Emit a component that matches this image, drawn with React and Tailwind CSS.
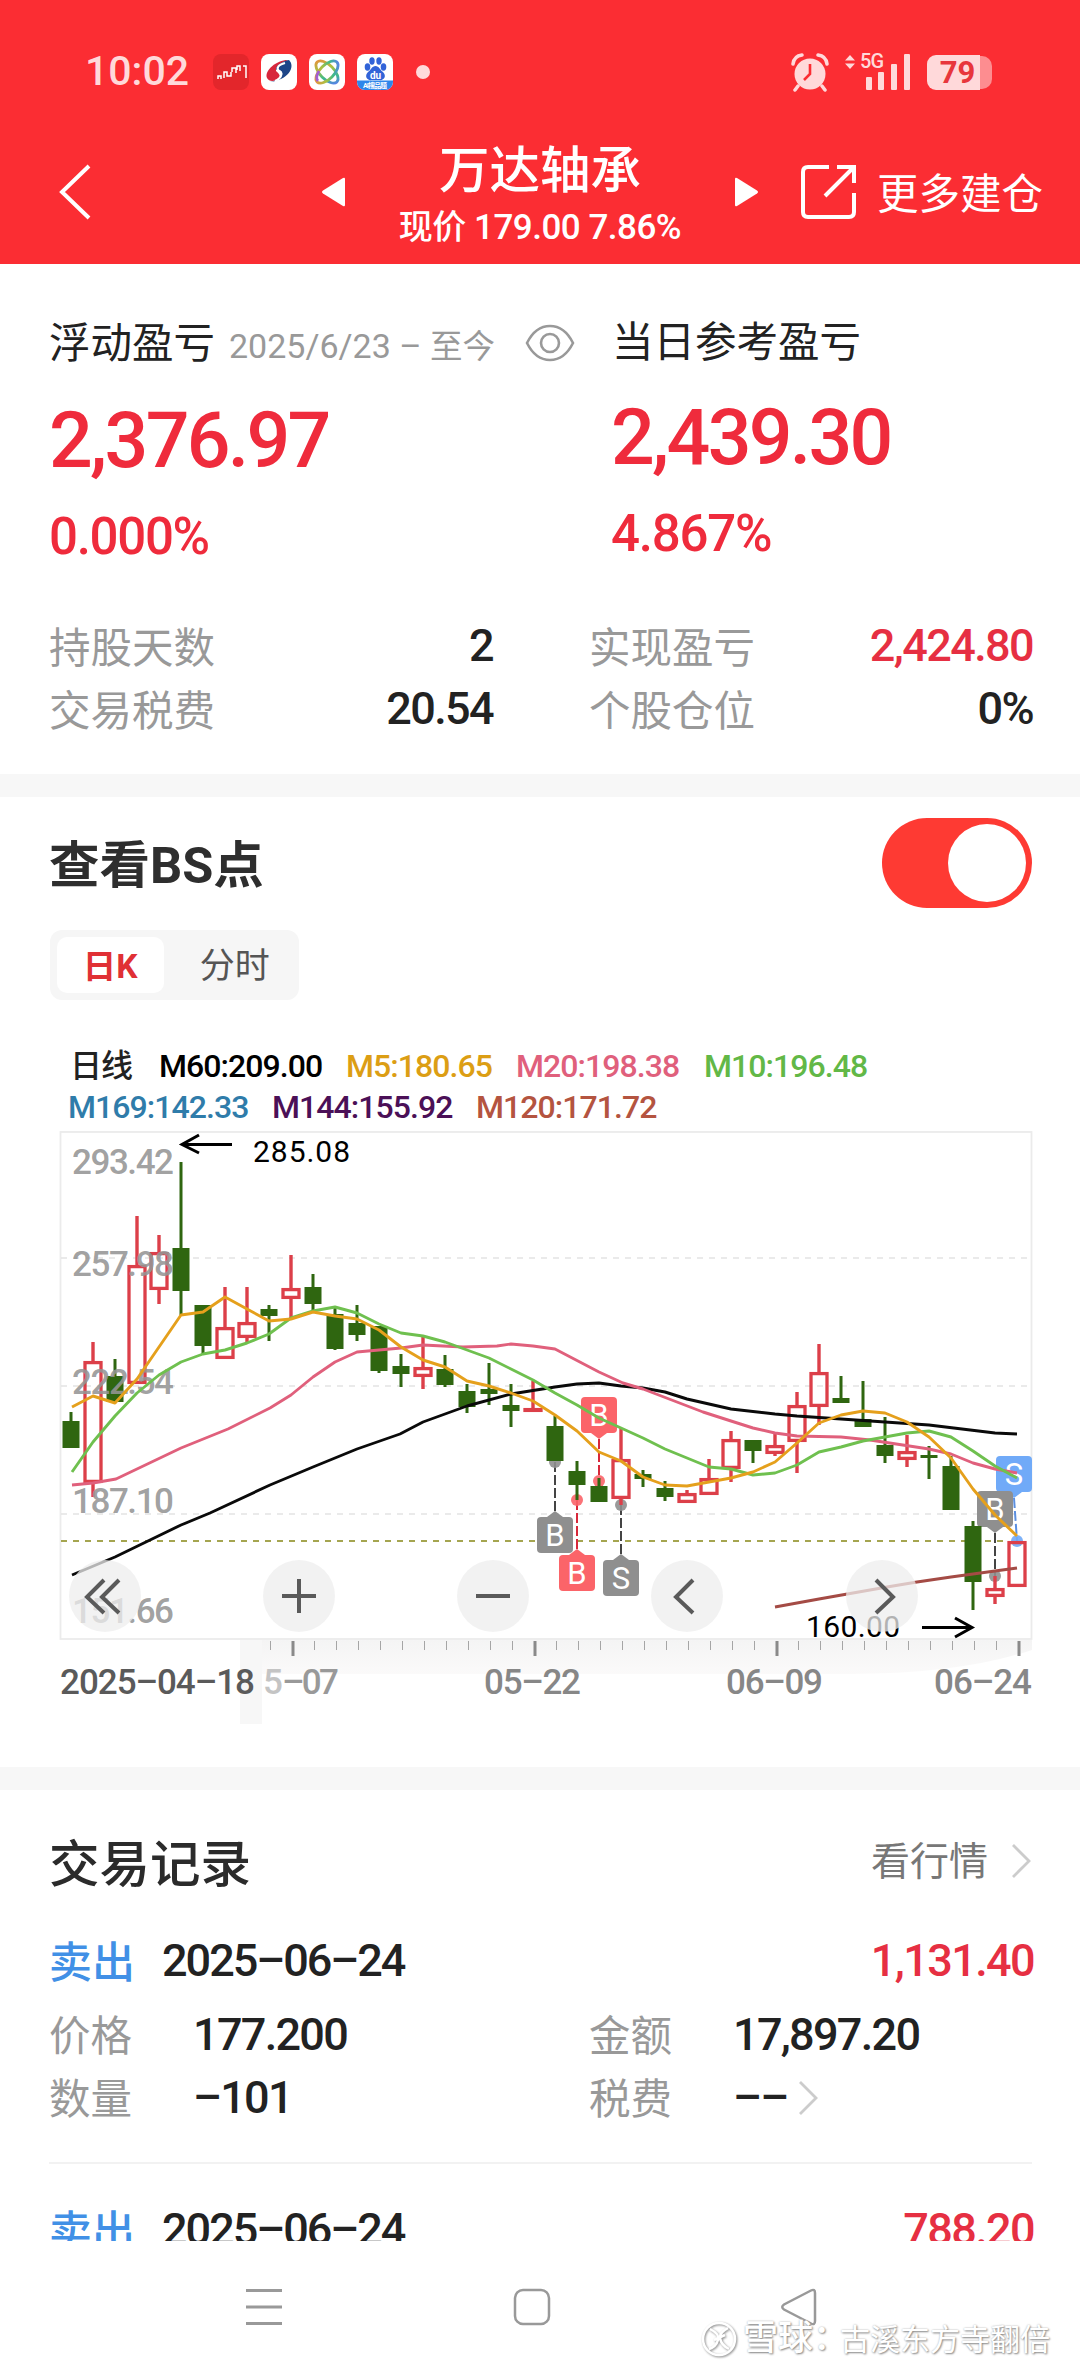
import React from 'react';
import clsx from 'clsx';

const UP = '#dc3f49';
const DOWN = '#2f6610';

// [up, high, bodyTop, bodyBottom, low]
const candles = [
    [0, 1412, 1421, 1448, 1448],
    [1, 1342, 1361, 1483, 1497],
    [0, 1359, 1376, 1402, 1402],
    [1, 1216, 1265, 1384, 1384],
    [1, 1235, 1252, 1290, 1304],
    [0, 1162, 1248, 1291, 1315],
    [0, 1305, 1305, 1346, 1354],
    [1, 1287, 1327, 1359, 1359],
    [1, 1287, 1322, 1338, 1342],
    [0, 1305, 1309, 1316, 1341],
    [1, 1255, 1288, 1299, 1320],
    [0, 1274, 1287, 1304, 1312],
    [0, 1308, 1314, 1349, 1350],
    [0, 1305, 1323, 1335, 1341],
    [0, 1326, 1326, 1371, 1373],
    [0, 1354, 1366, 1374, 1387],
    [1, 1336, 1367, 1377, 1389],
    [0, 1355, 1369, 1385, 1387],
    [0, 1384, 1391, 1407, 1413],
    [0, 1363, 1389, 1394, 1405],
    [0, 1384, 1405, 1411, 1427],
    [1, 1381, 1408, 1412, 1412],
    [0, 1416, 1426, 1461, 1461],
    [0, 1461, 1471, 1485, 1500],
    [0, 1478, 1486, 1502, 1502],
    [1, 1428, 1459, 1499, 1505],
    [0, 1470, 1474, 1479, 1487],
    [0, 1481, 1488, 1497, 1501],
    [1, 1490, 1493, 1503, 1503],
    [1, 1459, 1478, 1495, 1495],
    [1, 1431, 1439, 1469, 1482],
    [0, 1440, 1440, 1451, 1463],
    [1, 1432, 1445, 1454, 1456],
    [1, 1392, 1405, 1442, 1473],
    [1, 1344, 1372, 1407, 1425],
    [0, 1376, 1398, 1403, 1403],
    [0, 1381, 1419, 1427, 1427],
    [0, 1417, 1445, 1456, 1463],
    [1, 1435, 1451, 1460, 1467],
    [0, 1446, 1455, 1458, 1479],
    [0, 1456, 1466, 1510, 1510],
    [0, 1521, 1526, 1582, 1610],
    [1, 1576, 1588, 1597, 1604],
    [1, 1541, 1541, 1587, 1587],
];

const averages = [
    { color: '#0a0a0a', points: '72,1575 115,1557 181,1525 210,1513 270,1485 313,1467 357,1449 400,1434 423,1422 467,1406 511,1394 555,1387 577,1384 599,1383 621,1386 643,1388 665,1392 687,1399 731,1409 775,1414 797,1416 841,1419 885,1422 929,1425 995,1433 1017,1434' },
    { color: '#e0607c', points: '72,1485 93,1483 116,1479 181,1448 228,1429 270,1408 291,1395 313,1377 335,1362 357,1352 401,1348 423,1345 463,1347 497,1346 511,1344 533,1346 555,1349 599,1372 623,1383 643,1389 703,1412 731,1421 753,1428 775,1433 797,1436 841,1437 870,1440 929,1449 951,1454 973,1463 995,1469 1017,1473' },
    { color: '#6fc04f', points: '72,1472 93,1442 115,1416 137,1393 159,1375 181,1362 203,1354 225,1350 247,1343 269,1334 291,1318 313,1311 335,1307 357,1313 379,1324 401,1333 423,1336 445,1342 467,1350 489,1358 511,1369 533,1380 555,1393 577,1405 599,1418 621,1428 643,1438 665,1449 687,1458 709,1467 731,1469 753,1475 775,1473 797,1465 819,1452 841,1447 863,1441 885,1437 907,1433 929,1431 951,1437 973,1451 995,1466 1017,1478' },
    { color: '#e5a01c', points: '72,1407 93,1396 115,1403 137,1379 159,1347 181,1315 203,1312 225,1297 247,1309 269,1321 291,1319 313,1312 335,1316 357,1319 379,1330 401,1347 423,1360 445,1367 467,1381 489,1386 511,1393 533,1401 555,1415 577,1431 599,1452 621,1461 643,1477 665,1485 687,1486 709,1482 731,1478 753,1472 775,1462 797,1443 819,1423 841,1415 863,1411 885,1413 907,1422 929,1437 951,1458 973,1489 995,1515 1017,1536' },
    { color: '#a44b45', points: '775,1607 819,1599 887,1587 917,1582 951,1577 995,1571 1017,1568' },
];

const priceLabels = [
    ['293.42', 1174],
    ['257.98', 1276],
    ['222.54', 1394],
    ['187.10', 1513],
    ['151.66', 1623],
];

const markers = [
    { text: 'B', x: 555, y: 1517, up: true, fill: '#8f8f8f', line: [1462, 1511], dot: [555, 1462], dark: '#444' },
    { text: 'B', x: 577, y: 1555, up: true, fill: '#fb6469', line: [1500, 1549], dot: [577, 1500], dark: '#d8283a' },
    { text: 'B', x: 599, y: 1397, up: false, fill: '#fb6469', line: [1439, 1481], dot: [599, 1481], dark: '#d8283a' },
    { text: 'S', x: 621, y: 1560, up: true, fill: '#8f8f8f', line: [1505, 1554], dot: [621, 1505], dark: '#444' },
    { text: 'S', x: 1014, y: 1456, up: false, fill: '#70aaf8', line: [1498, 1541], dot: [1017, 1541], dark: '#5b8fe0' },
    { text: 'B', x: 995, y: 1491, up: false, fill: '#8f8f8f', line: [1533, 1576], dot: [995, 1576], dark: '#444' },
];

const legend = [
    [
        { text: '日线', style: 'w-[62px] ml-[70px] text-[#222]' },
        { text: 'M60:209.00', style: 'w-[162px] ml-[27px] text-black' },
        { text: 'M5:180.65', style: 'w-[145px] ml-[25px] text-[#dc9e14]' },
        { text: 'M20:198.38', style: 'w-[162px] ml-[25px] text-[#e0607c]' },
        { text: 'M10:196.48', style: 'w-[162px] ml-[26px] text-[#62b847]' },
    ],
    [
        { text: 'M169:142.33', style: 'w-[180px] ml-[68px] text-[#2f7caa]' },
        { text: 'M144:155.92', style: 'w-[180px] ml-[24px] text-[#4b1057]' },
        { text: 'M120:171.72', style: 'w-[180px] ml-[24px] text-[#b45440]' },
    ],
];

const Candle = ({ data, x }) => {
    const [up, high, top, bottom, low] = data;
    if (!up) {
        return (
            <g fill={DOWN}>
                <rect x={x - 1.5} y={high} width="3" height={low - high} />
                <rect x={x - 8.5} y={top} width="17" height={bottom - top} />
            </g>
        );
    }
    return (
        <g fill={UP}>
            <rect x={x - 1.7} y={high} width="3.4" height={top - high} />
            <rect x={x - 1.7} y={bottom} width="3.4" height={low - bottom} />
            <rect
                x={x - 8}
                y={top + 1.6}
                width="16"
                height={Math.max(bottom - top - 3.2, 0.8)}
                fill="none"
                stroke={UP}
                strokeWidth="3.3"
            />
        </g>
    );
};

const Marker = ({ m }) => (
    <g>
        <line x1={m.x} x2={m.dot[0]} y1={m.line[0]} y2={m.line[1]} stroke={m.dark} strokeWidth="2" strokeDasharray="10 3" />
        <circle cx={m.dot[0]} cy={m.dot[1]} r="6" fill={m.fill} opacity="0.9" />
        <rect x={m.x - 18} y={m.y} width="36" height="36" rx="4" fill={m.fill} />
        <path
            d={m.up ? `M${m.x - 8} ${m.y}l8 -6l8 6z` : `M${m.x - 8} ${m.y + 36}l8 6l8 -6z`}
            fill={m.fill}
        />
        <text x={m.x} y={m.y + 29} textAnchor="middle" fontSize="31" fill="#fff">{m.text}</text>
    </g>
);

const KLineChart = () => (
    <svg viewBox="0 1128 1080 612" className="block w-[1080px] h-[612px]">
        <defs>
            <linearGradient id="axisFade" x1="0" x2="0" y1="0" y2="1">
                <stop offset="0" stopColor="#f4f4f4" />
                <stop offset="1" stopColor="#fbfafa" />
            </linearGradient>
        </defs>
        <path d="M240 1640H1032V1650Q960 1674 850 1674H240Z" fill="url(#axisFade)" />
        <rect x="240" y="1640" width="22" height="84" fill="#f7f7f7" />
        <rect x="60.5" y="1132" width="971" height="507" fill="#fff" stroke="#ebebeb" strokeWidth="1.8" />

        {[1258, 1386, 1514].map((y) => (
            <line key={y} x1="61" x2="1031" y1={y} y2={y} stroke="#e3e3e3" strokeWidth="1.5" strokeDasharray="6 6" />
        ))}
        <line x1="61" x2="1008" y1="1541" y2="1541" stroke="#a5a550" strokeWidth="2" strokeDasharray="6 6" />

        {markers.map((m) => (
            <Marker key={`${m.x}-${m.y}`} m={m} />
        ))}
        {candles.map((c, i) => (
            <Candle key={i} data={c} x={71 + i * 22} />
        ))}

        {priceLabels.map(([label, y]) => (
            <text key={label} x="72" y={y} fontSize="35" fontWeight="500" fill="#959595" fillOpacity="0.9" textLength="102">{label}</text>
        ))}
        {averages.map((a) => (
            <polyline key={a.color} points={a.points} fill="none" stroke={a.color} strokeWidth="2.9" strokeLinejoin="round" />
        ))}

        {/* high / low callouts */}
        <g fill="none" stroke="#000" strokeWidth="3">
            <path d="M232 1144.500H182M199 1135L182 1144.500L199 1153" />
            <path d="M922 1627.500H972M955 1618L972 1627.500L955 1637" />
        </g>
        <text x="253" y="1162" fontSize="30" textLength="97">285.08</text>
        <text x="806" y="1637" fontSize="30" textLength="94">160.00</text>

        {/* time axis */}
        {Array.from({ length: 35 }, (_, i) => 270 + i * 22).map((x, i) => {
            const major = [291, 533, 775, 1017].some((v) => Math.abs(v - x) < 6);
            return major ? (
                <rect key={i} x={x - 0.500} y="1641" width="3" height="15" fill="#8a8a8a" />
            ) : (
                <rect key={i} x={x} y="1641" width="1" height="9" fill="#a5a5a5" />
            );
        })}
        <g fontSize="35" fontWeight="500" fill="#878787">
            <text x="60" y="1694" fill="#5a5a5a" textLength="195">2025–04–18</text>
            <text x="263" y="1694" fill="#c4c4c4">5</text>
            <text x="282" y="1694" fill="#999" textLength="57">–07</text>
            <text x="484" y="1694" textLength="97">05–22</text>
            <text x="726" y="1694" textLength="97">06–09</text>
            <text x="934" y="1694" textLength="98">06–24</text>
        </g>
    </svg>
);

const ChartButton = ({ className, d }) => (
    <button className={clsx('absolute top-[432px] w-[72px] h-[72px] rounded-full bg-[#ededed]/75', className)}>
        <svg viewBox="0 0 72 72" className="w-full h-full" fill="none" stroke="#5a5a5a" strokeWidth="4">
            <path d={d} />
        </svg>
    </button>
);

const StatusBar = () => (
    <div className="h-[144px] flex items-center text-[#ffd9da]">
        <span className="ml-[85px] w-[104px] text-[41px] font-medium">10:02</span>
        <div className="ml-[24px] flex gap-[12px]">
            <svg className="w-[36px] h-[36px]" viewBox="0 0 36 36">
                <rect width="36" height="36" rx="8" fill="#e3262b" />
                <path d="M5 25v-3h3v3M11 24v-6h3v4h4v-4M19 18v-4h4v5M24 16v-4h3v5M30 12h3v12" fill="none" stroke="#fff" strokeWidth="1.500" />
            </svg>
            <svg className="w-[36px] h-[36px]" viewBox="0 0 36 36">
                <rect width="36" height="36" rx="8" fill="#fff" />
                <path d="M28 6C17 5 3 16 6 24C8 28 14 28 18 24C20 21 17 19 15 17C14 12 21 8 28 6Z" fill="#d8273c" />
                <path d="M28 6C35 13 27 26 9 28C17 26 23 22 21 18C19 15 16 17 15 15C15 11 22 7 28 6Z" fill="#1d4588" />
                <path d="M24 9C17 11 15 14 18 17C22 19 21 24 14 27" fill="none" stroke="#fff" strokeWidth="2" />
            </svg>
            <svg className="w-[36px] h-[36px]" viewBox="0 0 36 36" fill="none" strokeWidth="2.800">
                <defs>
                    <linearGradient id="loop" x1="0" x2="36" y1="0" y2="0" gradientUnits="userSpaceOnUse" gradientTransform="rotate(30 18 18)">
                        <stop offset="0.100" stopColor="#e8913c" />
                        <stop offset="0.400" stopColor="#a9c142" />
                        <stop offset="0.650" stopColor="#3dba8a" />
                        <stop offset="0.900" stopColor="#5a7df0" />
                    </linearGradient>
                </defs>
                <rect width="36" height="36" rx="8" fill="#fff" />
                <ellipse cx="18" cy="18" rx="14" ry="7" transform="rotate(45 18 18)" stroke="url(#loop)" />
                <ellipse cx="18" cy="18" rx="14" ry="7" transform="rotate(-45 18 18)" stroke="url(#loop)" />
                <path d="M9 27Q6 24 10 17" stroke="#a35fd0" />
            </svg>
            <svg className="w-[36px] h-[36px]" viewBox="0 0 36 36">
                <clipPath id="tile"><rect width="36" height="36" rx="8" /></clipPath>
                <g clipPath="url(#tile)">
                    <rect width="36" height="36" fill="#fff" />
                    <g fill="#3163d8">
                        <ellipse cx="10.500" cy="13" rx="2.800" ry="3.700" />
                        <ellipse cx="15" cy="7" rx="2.700" ry="3.700" />
                        <ellipse cx="22" cy="7" rx="2.700" ry="3.700" />
                        <ellipse cx="26.500" cy="13" rx="2.800" ry="3.700" />
                        <path d="M18.500 12C22 12 23 16 26 18C30 22 27 27 22 26H15C10 27 7 22 11 18C14 16 15 12 18.500 12Z" />
                    </g>
                    <text x="18.500" y="24.500" textAnchor="middle" fontSize="10" fontWeight="700" fill="#fff">du</text>
                    <rect y="26.500" width="36" height="10" fill="#2f86ea" />
                    <text x="18" y="34" textAnchor="middle" fontSize="7" fontWeight="700" fill="#fff" textLength="24">AI搜品题</text>
                </g>
            </svg>
        </div>
        <span className="ml-[23px] w-[14px] h-[14px] rounded-full bg-[#ffd9da]" />
        <svg className="ml-[360px] w-[40px] h-[40px]" viewBox="0 0 40 40">
            <circle cx="20" cy="22" r="15.500" fill="#ffd9da" />
            <path d="M8 34L5 38M32 34L35 38M3 12Q4 4 12 3M37 12Q36 4 28 3" stroke="#ffd9da" strokeWidth="3.500" fill="none" strokeLinecap="round" />
            <path d="M20 12V22L14 28" fill="none" stroke="#fb2d33" strokeWidth="2.600" />
        </svg>
        <svg className="ml-[13px] w-[70px] h-[48px]" viewBox="0 -5 70 48" fill="#ffd9da">
            <path d="M2 7.500L7 2L12 7.500ZM2 10.500L7 16L12 10.500Z" />
            <text x="17" y="15" fontSize="20" fontWeight="500" textLength="24">5G</text>
            <rect x="23" y="24" width="6" height="13" rx="1" />
            <rect x="35" y="19" width="6" height="18" rx="1" />
            <rect x="48" y="11" width="6" height="26" rx="1" />
            <rect x="61" y="1" width="6" height="36" rx="1" />
        </svg>
        <div className="ml-[14px] flex items-center">
            <span className="w-[53px] h-[35px] rounded-l-[9px] bg-[#ffd9da] text-[#e8363c] text-[31px] leading-[36px] font-bold text-center pl-2">79</span>
            <span className="w-[12px] h-[33px] rounded-r-[10px] bg-[#fd8d90]" />
        </div>
    </div>
);

const NavHeader = () => (
    <div className="h-[120px] flex text-white">
        <svg className="ml-[56px] mt-[20px] w-[38px] h-[56px]" viewBox="0 0 38 56" fill="none" stroke="#fff" strokeWidth="4">
            <path d="M33 2L6 28L33 54" />
        </svg>
        <svg className="ml-[226px] mt-[32px] w-[28px] h-[32px]" viewBox="0 0 28 32" fill="#fff">
            <path d="M25 3V29Q25 31 23 30L3 17.500Q1 16 3 14.500L23 2Q25 1 25 3Z" />
        </svg>
        <div className="ml-[47px] w-[290px] flex flex-col items-center whitespace-nowrap">
            <h1 className="mt-[-3px] text-[50.500px] leading-[60px] font-medium">万达轴承</h1>
            <p className="mt-[3px] text-[35px] leading-[46px] font-medium tracking-[-0.500px]">
                <span className="text-[34px]">现价</span> 179.00 7.86%
            </p>
        </div>
        <svg className="ml-[47px] mt-[32px] w-[28px] h-[32px]" viewBox="0 0 28 32" fill="#fff">
            <path d="M3 3V29Q3 31 5 30L25 17.500Q27 16 25 14.500L5 2Q3 1 3 3Z" />
        </svg>
        <svg className="ml-[39px] mt-[20px] w-[58px] h-[56px]" viewBox="0 0 58 56" fill="none" stroke="#fff" strokeWidth="4">
            <path d="M30 3H9Q4 3 4 8V48Q4 53 9 53H50Q55 53 55 48V29M38 3H55V19M55 3L26 32" />
        </svg>
        <span className="ml-[20px] mt-[21px] text-[41.500px] leading-[60px] whitespace-nowrap">更多建仓</span>
    </div>
);

const Stat = ({ label, value, red }) => (
    <div className="w-[442px] h-[63px] flex justify-between items-center">
        <span className="text-[41.500px] text-[#999] pt-[2px]">{label}</span>
        <span className={clsx('text-[45px] font-medium tracking-[-1.600px] pb-[5px] mr-[-2px]', red ? 'text-[#e62f42]' : 'text-[#222]')}>{value}</span>
    </div>
);

const Summary = () => (
    <section className="h-[510px] pt-[49px] pl-[49px]">
        <div className="h-[60px] flex items-center whitespace-nowrap text-[#222]">
            <span className="text-[41.500px] pt-[2px]">浮动盈亏</span>
            <span className="ml-[14px] w-[267px] text-[34px] text-[#999] pt-[6px]">2025/6/23 – <span className="text-[32.500px]">至今</span></span>
            <svg className="ml-[29px] w-[50px] h-[38px]" viewBox="0 0 50 38" fill="none" stroke="#999" strokeWidth="2.600">
                <path d="M2 19C8 7 16 2 25 2S42 7 48 19C42 31 34 36 25 36S8 31 2 19Z" />
                <circle cx="25" cy="19" r="9" />
            </svg>
            <span className="ml-[37px] text-[41.500px] pt-[1px]">当日参考盈亏</span>
        </div>
        <div className="mt-[21px] flex text-[#ef2b3c] font-medium">
            <div className="w-[562px]">
                <div className="mt-[2px] h-[90px] leading-[90px] text-[77px] tracking-[-2.700px]">2,376.97</div>
                <div className="mt-[21px] h-[60px] leading-[60px] text-[51px] tracking-[-1.300px]">0.000%</div>
            </div>
            <div className="mt-[-1px]">
                <div className="h-[90px] leading-[90px] text-[77px] tracking-[-2.700px]">2,439.30</div>
                <div className="mt-[21px] h-[60px] leading-[60px] text-[51px] tracking-[-1.200px]">4.867%</div>
            </div>
        </div>
        <div className="mt-[50px] grid grid-cols-[442px_442px] gap-x-[98px]">
            <Stat label="持股天数" value="2" />
            <Stat label="实现盈亏" value="2,424.80" red />
            <Stat label="交易税费" value="20.54" />
            <Stat label="个股仓位" value="0%" />
        </div>
    </section>
);

const BsChart = () => (
    <section className="h-[970px] pt-[21px]">
        <div className="h-[90px] pl-[49px] pr-[48px] flex items-center justify-between">
            <h2 className="text-[50.500px] font-bold text-[#2e2e2e] pt-[6px]">查看BS点</h2>
            <button className="w-[150px] h-[90px] rounded-full bg-[#fe3a33] p-[6px] flex justify-end">
                <span className="w-[78px] h-[78px] rounded-full bg-white" />
            </button>
        </div>
        <div className="mt-[22px] ml-[50px] w-[249px] h-[70px] rounded-[12px] bg-[#f6f6f6] p-[7px] flex">
            <span className="w-[108px] h-[56px] rounded-[10px] bg-white text-[#e03035] text-[33.500px] leading-[59px] font-bold text-center">日K</span>
            <span className="w-[130px] text-[#555] text-[35px] leading-[60px] text-center pl-[14px]">分时</span>
        </div>
        <div className="mt-[46px] text-[32px] font-medium whitespace-nowrap">
            {legend.map((row, i) => (
                <div key={i} className="h-[41px] leading-[41px] flex tracking-[-0.950px]">
                    {row.map((item) => (
                        <span key={item.text} className={item.style}>{item.text}</span>
                    ))}
                </div>
            ))}
        </div>
        <div className="relative">
            <KLineChart />
            <ChartButton className="left-[69px]" d="M35 20L18 37L35 53M50 20L33 37L50 53" />
            <ChartButton className="left-[263px]" d="M36 19V53M19 36H53" />
            <ChartButton className="left-[457px]" d="M19 36H53" />
            <ChartButton className="left-[651px]" d="M42 20L25 37L42 53" />
            <ChartButton className="left-[846px]" d="M30 20L47 37L30 53" />
        </div>
    </section>
);

const RecordHead = ({ date, profit }) => (
    <div className="h-[60px] flex items-center text-[45px] font-medium text-[#222]">
        <span className="w-[113px] text-[43px] text-[#4190e6] pt-[5px]">卖出</span>
        <span className="tracking-[-2px]">{date}</span>
        <span className="ml-auto tracking-[-1.600px] text-[#e62f42] mr-[-2px]">{profit}</span>
    </div>
);

const Chevron = ({ className }) => (
    <svg className={clsx('w-[22px] h-[36px]', className)} viewBox="0 0 22 36" fill="none" stroke="#ccc" strokeWidth="2.800">
        <path d="M3 2L19 18L3 34" />
    </svg>
);

const Field = ({ label, value, arrow }) => (
    <div className="h-[63px] flex items-center text-[#222]">
        <span className="w-[144px] text-[41.500px] text-[#999] pt-[6px]">{label}</span>
        <span className="text-[45px] font-medium tracking-[-1.700px]">{value}</span>
        {arrow && <Chevron className="ml-[10px]" />}
    </div>
);

const Records = () => (
    <section className="h-[451px] pt-[43px] pl-[49px] pr-[48px] overflow-hidden">
        <div className="h-[60px] flex items-center">
            <h2 className="text-[50.500px] font-medium text-[#2b2b2b] pt-[3px]">交易记录</h2>
            <span className="ml-auto text-[39px] text-[#777] pb-[2px]">看行情</span>
            <Chevron className="ml-[22px] mb-[4px]" />
        </div>
        <div className="mt-[38px]">
            <RecordHead date="2025–06–24" profit="1,131.40" />
            <div className="mt-[12px] grid grid-cols-[540px_1fr]">
                <Field label="价格" value="177.200" />
                <Field label="金额" value="17,897.20" />
                <Field label="数量" value="–101" />
                <Field label="税费" value="––" arrow />
            </div>
        </div>
        <div className="mt-[33px] border-t-2 border-[#f2f2f2] pt-[36px]">
            <RecordHead date="2025–06–24" profit="788.20" />
        </div>
    </section>
);

const SystemBar = () => (
    <div className="relative h-[132px] bg-white">
        <div className="h-full flex items-center pl-[244px]">
            <svg className="w-[40px] h-[40px]" viewBox="0 0 40 40" stroke="#999" strokeWidth="3">
                <path d="M2 3.500H38M2 20H38M2 36.500H38" />
            </svg>
            <svg className="ml-[228px] w-[40px] h-[40px]" viewBox="0 0 40 40" fill="none" stroke="#999" strokeWidth="2.500">
                <rect x="3" y="3" width="34" height="34" rx="8" />
            </svg>
            <svg className="ml-[227px] w-[40px] h-[40px]" viewBox="0 0 40 40" fill="none" stroke="#999" strokeWidth="2.500">
                <path d="M32 3.500Q36 1.500 36 6V34Q36 38.500 32 36.500L5 22.500Q1.500 20 5 17.500Z" />
            </svg>
        </div>
        <div className="absolute left-[700px] top-[75px] h-[46px] flex items-center whitespace-nowrap text-white [text-shadow:1px_1px_2px_#888,0_0_2px_#bbb]">
            <svg className="w-[38px] h-[38px] drop-shadow-[1px_1px_1px_#888]" viewBox="0 0 38 38" fill="none" stroke="#fff" strokeWidth="2.500">
                <circle cx="19" cy="19" r="16" />
                <path d="M10 9Q20 14 18 20Q16 27 9 29M28 8Q19 13 20 18Q21 25 29 29M14 20L25 15" />
            </svg>
            <span className="ml-[5px] text-[35px] font-medium">雪球：</span>
            <span className="ml-[-8px] text-[30px]">古溪东方寺翻倍</span>
        </div>
    </div>
);

const App = () => (
    <main className="w-[1080px] h-[2373px] overflow-hidden bg-white font-['Roboto','Noto_Sans_CJK_SC',sans-serif]">
        <header className="h-[264px] bg-[#fb2d33]">
            <StatusBar />
            <NavHeader />
        </header>
        <Summary />
        <div className="h-[23px] bg-[#f7f7f7]" />
        <BsChart />
        <div className="h-[23px] bg-[#f7f7f7]" />
        <Records />
        <SystemBar />
    </main>
);

export default App;
